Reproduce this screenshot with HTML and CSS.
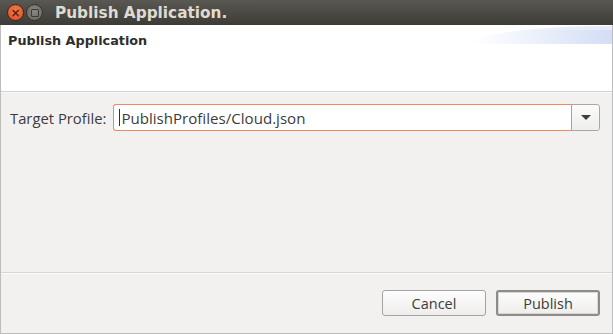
FILE: index.html
```html
<!DOCTYPE html>
<html>
<head>
  <meta http-equiv="content-type" content="text/html; charset=UTF-8">
  <title>Publish Application.</title>
  <link rel="stylesheet" href="styles.css">
</head>
<body>
<div class="window">
  <div class="titlebar">
    <span class="wbtn close">&#215;</span>
    <span class="wbtn max"><span class="sq"></span></span>
    <span class="wtitle">Publish Application.</span>
  </div>
  <div class="header">
    <div class="swoosh"></div>
    <h1>Publish Application</h1>
  </div>
  <div class="content">
    <div class="row">
      <label for="profile">Target Profile:</label>
      <div class="combo">
        <div class="entry" id="profile"><span class="caret"></span>PublishProfiles/Cloud.json</div>
        <div class="arrow"><span></span></div>
      </div>
    </div>
  </div>
  <div class="footer">
    <button class="btn">Cancel</button>
    <button class="btn default">Publish</button>
  </div>
</div>
</body>
</html>
```

FILE: styles.css
```css
html, body {
	margin: 0px;
	padding: 0px;
	background-color: #f2f1f0;
}
.window {
	width: 613px;
	height: 334px;
	box-sizing: border-box;
	border-left: 1px solid #bdbdbd;
	border-right: 1px solid #bdbdbd;
	border-bottom: 1px solid #bdbdbd;
	display: flex;
	flex-direction: column;
	font-family: "Open Sans", "DejaVu Sans", sans-serif;
	color: #3c3c3c;
	background: #f2f1f0;
}
.titlebar {
	height: 25px;
	margin: 0 -1px;
	background: linear-gradient(#5a5852, #3d3b36);
	display: flex;
	align-items: center;
	padding-left: 7px;
}
.wbtn {
	width: 17px;
	height: 17px;
	border-radius: 50%;
	box-sizing: border-box;
	display: flex;
	align-items: center;
	justify-content: center;
	margin-right: 2px;
}
.close {
	background: radial-gradient(circle at 50% 40%, #f37d51, #df4a1b);
	border: 1px solid #3a2a22;
	color: #5a1d0a;
	font-size: 12px;
	line-height: 1;
	font-family: "DejaVu Sans", sans-serif;
	font-weight: bold;
}
.max {
	background: radial-gradient(circle at 50% 40%, #8a8882, #64625d);
	border: 1px solid #34332f;
}
.max .sq {
	width: 6px;
	height: 6px;
	border: 1px solid #3b3a36;
	border-radius: 1px;
}
.wtitle {
	margin-left: 10px;
	color: #dfdbd2;
	font-family: "DejaVu Sans", sans-serif;
	font-weight: bold;
	font-size: 15.3px;
}
.header {
	position: relative;
	height: 66px;
	background: #fff;
	border-bottom: 1px solid #d5d3cf;
	box-shadow: 0 1px 0 #fafaf9;
	overflow: hidden;
}
.header h1 {
	position: relative;
	margin: 0;
	padding: 8px 0 0 7px;
	font-family: "DejaVu Sans", sans-serif;
	font-size: 12.8px;
	font-weight: bold;
	color: #2e2e2e;
}
.swoosh {
	position: absolute;
	right: 0;
	top: 1px;
	width: 140px;
	height: 18px;
	border-top-left-radius: 140px 18px;
	background: linear-gradient(to right, #ffffff, #eef2fb 40%, #d3ddf5);
}
.swoosh::before {
	content: "";
	position: absolute;
	right: 0;
	top: 0;
	width: 100px;
	height: 4px;
	background: linear-gradient(to right, rgba(255,255,255,0), rgba(255,255,255,0.4));
}
.content {
	flex: 1;
	padding: 12px 12px 0 9px;
	border-bottom: 1px solid #d8d6d3;
	box-shadow: 0 1px 0 #fbfbfa;
}
.row {
	display: flex;
	align-items: center;
	gap: 7px;
	font-size: 14.8px;
}
.combo {
	flex: 1;
	display: flex;
	height: 27px;
	border: 1px solid #a9a7a3;
	border-radius: 3px;
	box-sizing: border-box;
	background: #fafafa;
}
.entry {
	flex: 1;
	display: flex;
	align-items: center;
	border: 1px solid #ef8a5e;
	margin: -1px 0 -1px -1px;
	border-radius: 3px 0 0 3px;
	padding-left: 5px;
	background: #fff;
	color: #3c3c3c;
	font-size: 15.1px;
}
.caret {
	display: inline-block;
	width: 1px;
	height: 17px;
	background: #333;
	margin-right: 1px;
}
.arrow {
	width: 27px;
	display: flex;
	align-items: center;
	justify-content: center;
	background: linear-gradient(#fbfbfb, #efeeed);
	border-radius: 0 3px 3px 0;
}
.arrow span {
	width: 0;
	height: 0;
	border-left: 5px solid transparent;
	border-right: 5px solid transparent;
	border-top: 5px solid #3c3c3c;
}
.footer {
	height: 60px;
	display: flex;
	justify-content: flex-end;
	align-items: flex-start;
	gap: 10px;
	padding: 17px 12px 0 0;
	box-sizing: border-box;
}
.btn {
	width: 104px;
	height: 26px;
	border: 1px solid #a6a4a0;
	border-radius: 3px;
	background: linear-gradient(#fdfdfd, #eeedec);
	font-family: "Open Sans", "DejaVu Sans", sans-serif;
	font-size: 14.5px;
	color: #3c3c3c;
	padding: 0;
}
.btn.default {
	border: 2px solid #8e8c88;
	box-shadow: inset 0 0 0 1px #d8d7d5;
}
```
